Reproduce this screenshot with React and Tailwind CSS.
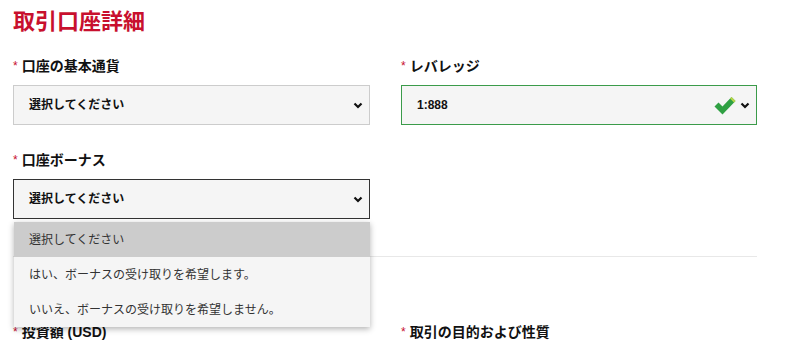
const font = { fontFamily: '"Liberation Sans", "Noto Sans CJK JP", sans-serif' };

const Chevron = () => (
  <svg width="10" height="7" viewBox="0 0 10 7" className="shrink-0">
    <path d="M1.5 1.5 L5 5 L8.5 1.5" fill="none" stroke="#111" strokeWidth="2.2" />
  </svg>
);

const Check = () => (
  <svg width="22" height="19" viewBox="0 0 22 19" className="shrink-0">
    <path d="M0.5 10.5 L4.5 6.5 L8.5 10.5 L17.5 1 L21.5 5 L8.5 18.5 Z" fill="#2fa043" />
    <path d="M17.5 1 L21.5 5 L20 6.5 L16 2.5 Z" fill="#b9d64a" />
  </svg>
);

const Label = ({ children }) => (
  <div className="h-5 flex items-center text-[14px] font-bold text-[#111] leading-5">
    <span className="text-[#c8102e] text-[12px] mr-[4px] font-normal">*</span>
    {children}
  </div>
);

const Select = ({ value, border, check }) => (
  <div
    className={`mt-[9px] h-10 flex items-center pl-[15px] pr-[6px] bg-[#f5f5f5] border ${border}`}
  >
    <span className="flex-1 text-[12px] font-bold text-[#111]">{value}</span>
    {check && (
      <span className="mr-[4px] flex">
        <Check />
      </span>
    )}
    <Chevron />
  </div>
);

export default function App() {
  const options = [
    "選択してください",
    "はい、ボーナスの受け取りを希望します。",
    "いいえ、ボーナスの受け取りを希望しません。",
  ];
  return (
    <div className="relative w-[792px] h-[346px] overflow-hidden bg-white" style={font}>
      <div className="pl-[13px] w-[757px]">
        <h1 className="pt-[8px] text-[22px] leading-7 font-bold text-[#c8102e]">取引口座詳細</h1>
        <div className="mt-5 grid grid-cols-[357px_356px] gap-x-[31px]">
          <div>
            <Label>口座の基本通貨</Label>
            <Select value="選択してください" border="border-[#cccccc]" />
          </div>
          <div>
            <Label>レバレッジ</Label>
            <Select value="1:888" border="border-[#3b9b4a]" check />
          </div>
          <div className="mt-[25px]">
            <Label>口座ボーナス</Label>
            <Select value="選択してください" border="border-[#333333]" />
          </div>
          <div />
        </div>
        <div className="mt-[37px] border-t border-[#e8e8e8]" />
        <div className="mt-[65px] grid grid-cols-[357px_356px] gap-x-[31px]">
          <Label>投資額 (USD)</Label>
          <Label>取引の目的および性質</Label>
        </div>
      </div>

      <div className="absolute left-[14px] top-[222px] w-[356px] bg-[#f5f5f5] shadow-[0_2px_6px_rgba(0,0,0,0.3)]">
        {options.map((o, i) => (
          <div
            key={o}
            className={`h-[35px] flex items-center pl-[15px] text-[12px] text-[#333] ${
              i === 0 ? "bg-[#cccccc]" : ""
            }`}
          >
            {o}
          </div>
        ))}
      </div>
    </div>
  );
}
